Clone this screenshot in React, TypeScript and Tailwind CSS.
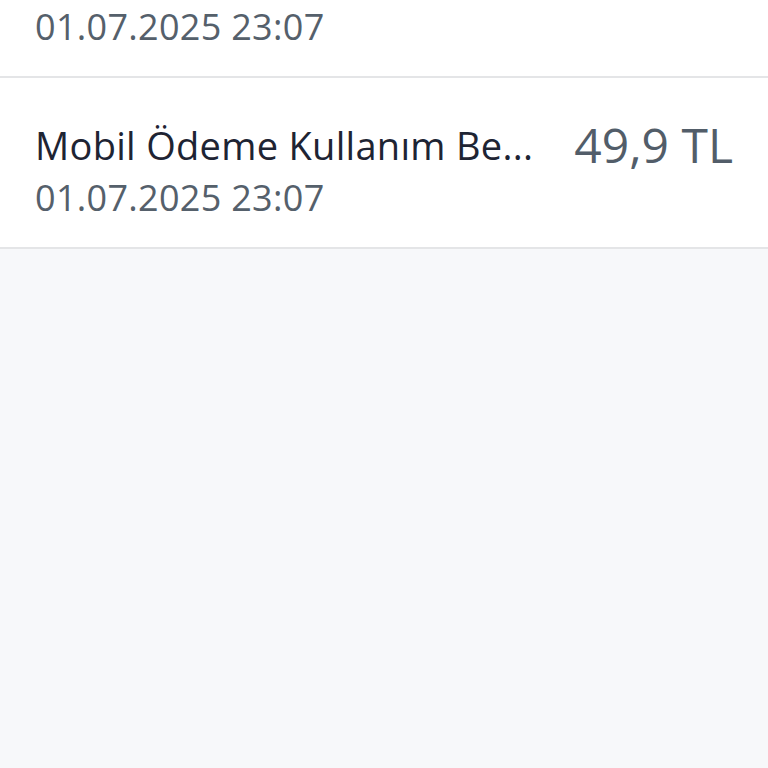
import React from "react";

interface Txn {
  title: string;
  date: string;
  amount: string;
}

const TXNS: Txn[] = [
  { title: "Google Ödeme (Abonelik)", date: "01.07.2025 23:07", amount: "129,9 TL" },
  { title: "Mobil Ödeme Kullanım Be...", date: "01.07.2025 23:07", amount: "49,9 TL" },
];

function Row({ t }: { t: Txn }) {
  return (
    <div className="flex items-start justify-between gap-[30px] bg-white pl-[35px] pr-[35px] pt-[43px] pb-[27px] border-b-2 border-[#e4e5e7]">
      <div className="min-w-0">
        <div className="whitespace-nowrap text-[38px] leading-[48px] tracking-[0.3px] text-[#1e2433]">
          {t.title}
        </div>
        <div className="mt-[7px] text-[36px] leading-[44px] tracking-[0.3px] text-[#55606b]">{t.date}</div>
      </div>
      <div className="shrink-0 text-[48px] leading-[48px] text-[#525d69]">{t.amount}</div>
    </div>
  );
}

export default function App() {
  return (
    <div
      className="h-[768px] w-[768px] overflow-hidden bg-[#f7f8fa]"
      style={{ fontFamily: "'Open Sans', Lato, sans-serif" }}
    >
      <div className="-mt-[93px]">
        {TXNS.map((t, i) => (
          <Row key={i} t={t} />
        ))}
      </div>
    </div>
  );
}
